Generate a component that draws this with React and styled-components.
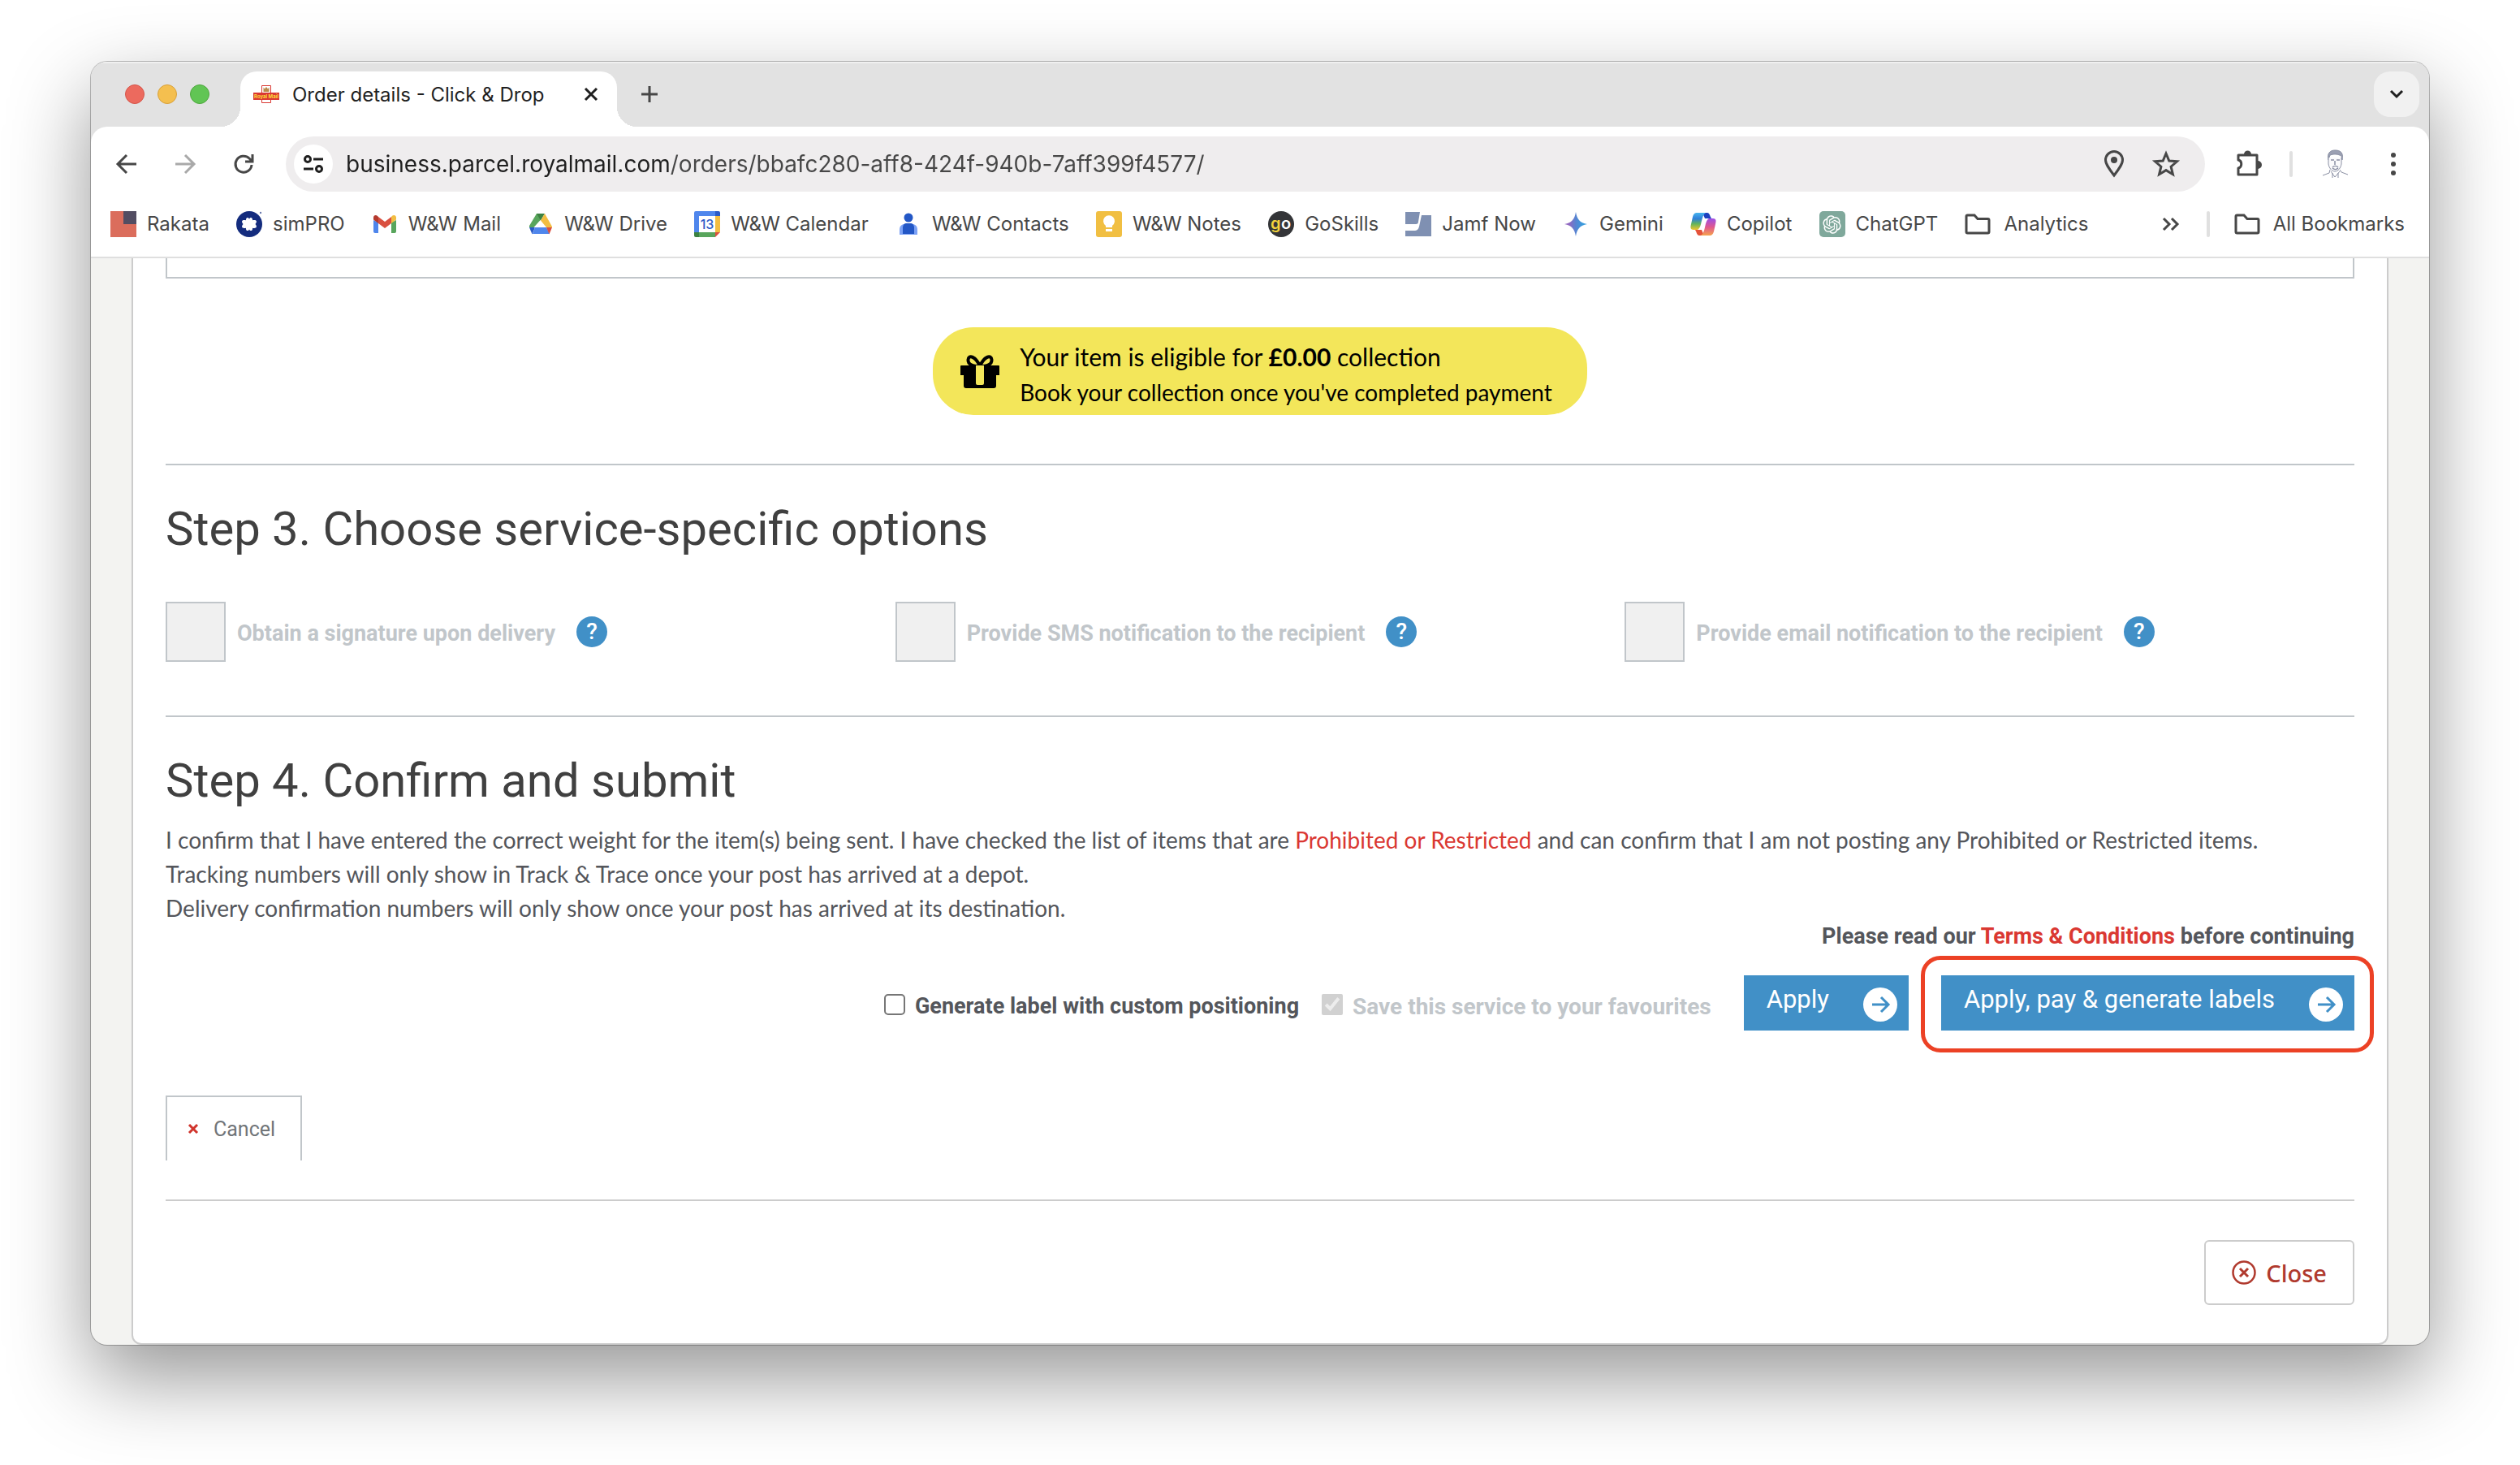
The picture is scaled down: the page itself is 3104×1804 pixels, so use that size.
import React from "react";
import styled, { createGlobalStyle } from "styled-components";
import { RiOpenaiFill } from "react-icons/ri";

const bookmarks = [
  { name: "Rakata", icon: <RakataIcon /> },
  { name: "simPRO", icon: <SimproIcon /> },
  { name: "W&W Mail", icon: <MailIcon /> },
  { name: "W&W Drive", icon: <DriveIcon /> },
  { name: "W&W Calendar", icon: <CalendarIcon /> },
  { name: "W&W Contacts", icon: <ContactsIcon /> },
  { name: "W&W Notes", icon: <NotesIcon /> },
  { name: "GoSkills", icon: <GoIcon /> },
  { name: "Jamf Now", icon: <JamfIcon /> },
  { name: "Gemini", icon: <GeminiIcon /> },
  { name: "Copilot", icon: <CopilotIcon /> },
  { name: "ChatGPT", icon: <ChatIcon /> },
  { name: "Analytics", icon: <FolderIcon />, folder: true },
];

const options = [
  "Obtain a signature upon delivery",
  "Provide SMS notification to the recipient",
  "Provide email notification to the recipient",
];

export default function App() {
  return (
    <Desktop>
      <GlobalStyle />
      <Window>
        <TabStrip>
          <Lights>
            <Light color="#ec6a5e" edge="#d5554a" />
            <Light color="#f4bf4f" edge="#d8a13b" />
            <Light color="#61c554" edge="#4fa73f" />
          </Lights>
          <Tab>
            <RoyalMailIcon />
            <TabTitle>Order details - Click & Drop</TabTitle>
            <PlainButton aria-label="Close tab">
              <svg width="24" height="24" viewBox="0 0 24 24">
                <path d="M5 5l14 14M19 5L5 19" stroke="#1f1f1f" strokeWidth="3" />
              </svg>
            </PlainButton>
          </Tab>
          <NewTab aria-label="New tab">
            <svg width="24" height="24" viewBox="0 0 24 24">
              <path d="M12 2v20M2 12h20" stroke="#474747" strokeWidth="3" />
            </svg>
          </NewTab>
          <TabSearch aria-label="Search tabs">
            <svg width="24" height="24" viewBox="0 0 24 24" fill="none">
              <path d="M5 8l7 7 7-7" stroke="#1f1f1f" strokeWidth="3" />
            </svg>
          </TabSearch>
        </TabStrip>
        <Chrome>
          <Toolbar>
            <Nav>
              <NavButton aria-label="Back">
                <svg width="32" height="32" viewBox="0 0 32 32" fill="none">
                  <path d="M28 16H6M16 5L5 16l11 11" stroke="#474747" strokeWidth="3" />
                </svg>
              </NavButton>
              <NavButton aria-label="Forward" disabled>
                <svg width="32" height="32" viewBox="0 0 32 32" fill="none">
                  <path d="M4 16h22M16 5l11 11-11 11" stroke="#a9a9a9" strokeWidth="3" />
                </svg>
              </NavButton>
              <NavButton aria-label="Reload">
                <svg width="32" height="32" viewBox="0 0 32 32" fill="none">
                  <path d="M26 17a10 10 0 1 1-3-8l3 3M27 4v9h-9" stroke="#474747" strokeWidth="3" />
                </svg>
              </NavButton>
            </Nav>
            <Omnibox>
              <SiteInfo aria-label="View site information">
                <svg width="28" height="28" viewBox="0 0 28 28" fill="none" stroke="#1f1f1f" strokeWidth="3">
                  <circle cx="7" cy="8" r="3.500" />
                  <path d="M14 8h12M2 20h12" />
                  <circle cx="21" cy="20" r="3.500" />
                </svg>
              </SiteInfo>
              <Address
                aria-label="Address"
                type="text"
                defaultValue="business.parcel.royalmail.com/orders/bbafc280-aff8-424f-940b-7aff399f4577/"
              />
              <PlainButton aria-label="Location">
                <svg width="40" height="40" viewBox="0 0 40 40" fill="none">
                  <path
                    d="M20 34C14 26 9.500 20 9.500 15a10.500 10.500 0 0 1 21 0c0 5-4.500 11-10.500 19z"
                    stroke="#474747"
                    strokeWidth="3"
                  />
                  <circle cx="20" cy="15" r="4" fill="#474747" />
                </svg>
              </PlainButton>
              <PlainButton aria-label="Bookmark this tab">
                <svg width="40" height="40" viewBox="0 0 40 40" fill="none">
                  <path
                    d="M20 7l3.800 9 9.700.8-7.400 6.400 2.300 9.500L20 27.600l-8.400 5.100 2.300-9.500-7.400-6.400 9.700-.8z"
                    stroke="#474747"
                    strokeWidth="3"
                  />
                </svg>
              </PlainButton>
            </Omnibox>
            <Tools>
              <NavButton aria-label="Extensions">
                <svg width="36" height="36" viewBox="0 0 36 36" fill="none">
                  <path
                    d="M5 7h23v24H5v-8c5-1 5-9 0-10z"
                    stroke="#474747"
                    strokeWidth="3"
                    strokeLinejoin="round"
                  />
                  <path d="M12 6a4.500 4.500 0 0 1 9 0zM29 14a5 5 0 0 1 0 10z" fill="#474747" />
                </svg>
              </NavButton>
              <ToolDivider />
              <NavButton aria-label="Profile">
                <PortraitIcon />
              </NavButton>
              <NavButton aria-label="Menu">
                <svg width="32" height="32" viewBox="0 0 32 32" fill="#474747">
                  <circle cx="16" cy="5" r="3" />
                  <circle cx="16" cy="16" r="3" />
                  <circle cx="16" cy="27" r="3" />
                </svg>
              </NavButton>
            </Tools>
          </Toolbar>
          <BookmarkBar>
            <BookmarkList>
              {bookmarks.map((item) => (
                <Bookmark href="#" key={item.name} $folder={item.folder}>
                  {item.icon}
                  {item.name}
                </Bookmark>
              ))}
            </BookmarkList>
            <PlainButton aria-label="More bookmarks">
              <svg width="28" height="28" viewBox="0 0 28 28" fill="none">
                <path d="M5 7l7 7-7 7M15 7l7 7-7 7" stroke="#474747" strokeWidth="3" />
              </svg>
            </PlainButton>
            <Divider />
            <Bookmark href="#" $folder>
              <FolderIcon />
              All Bookmarks
            </Bookmark>
          </BookmarkBar>
        </Chrome>

        <Page>
          <Card>
            <BoxEnd />
            <Banner>
              <GiftIcon />
              <BannerText>
                <BannerTitle>
                  Your item is eligible for <b>£0.00</b> collection
                </BannerTitle>
                <div>Book your collection once you've completed payment</div>
              </BannerText>
            </Banner>
            <Rule />
            <Heading>Step 3. Choose service-specific options</Heading>
            <Options>
              {options.map((label, i) => (
                <Option key={label}>
                  <BigCheck type="checkbox" id={"option" + i} disabled />
                  <Label htmlFor={"option" + i} $muted>
                    {label}
                  </Label>
                  <Help aria-label="Help">?</Help>
                </Option>
              ))}
            </Options>
            <Rule />
            <Heading>Step 4. Confirm and submit</Heading>
            <Body>
              I confirm that I have entered the correct weight for the item(s) being sent. I have
              checked the list of items that are <Link href="#">Prohibited or Restricted</Link> and
              can confirm that I am not posting any Prohibited or Restricted items.
              <br />
              Tracking numbers will only show in Track & Trace once your post has arrived at a depot.
              <br />
              Delivery confirmation numbers will only show once your post has arrived at its
              destination.
            </Body>
            <Terms>
              Please read our <Link href="#">Terms & Conditions</Link> before continuing
            </Terms>
            <Actions>
              <CheckRow>
                <SmallCheck type="checkbox" id="custom" />
                <Label htmlFor="custom">Generate label with custom positioning</Label>
              </CheckRow>
              <CheckRow>
                <SmallCheck type="checkbox" id="favourite" defaultChecked disabled />
                <Label htmlFor="favourite" $muted $large>
                  Save this service to your favourites
                </Label>
              </CheckRow>
              <ActionButtons>
                <Submit>
                  <SubmitText>Apply</SubmitText>
                  <ArrowIcon />
                </Submit>
                <Marked>
                  <Submit>
                    <SubmitText>Apply, pay & generate labels</SubmitText>
                    <ArrowIcon />
                  </Submit>
                </Marked>
              </ActionButtons>
            </Actions>
            <Cancel>
              <svg width="14" height="14" viewBox="0 0 14 14">
                <path d="M2 2l10 10M12 2L2 12" stroke="#d0342c" strokeWidth="3" />
              </svg>
              Cancel
            </Cancel>
            <Rule $light />
            <Footer>
              <Close>
                <svg width="30" height="30" viewBox="0 0 30 30" fill="none" stroke="#b03a2e">
                  <circle cx="15" cy="15" r="13.500" strokeWidth="2.500" />
                  <path d="M10 10l10 10M20 10L10 20" strokeWidth="3" />
                </svg>
                Close
              </Close>
            </Footer>
          </Card>
        </Page>
      </Window>
    </Desktop>
  );
}

function RoyalMailIcon() {
  return (
    <svg width="32" height="32" viewBox="0 0 32 32">
      <path d="M10.500 5.500h11v21h-11z" fill="#fff" stroke="#da3832" />
      <path d="M12.500 7.500l1.500 2 2-2.500 2 2.500 1.500-2v5.500h-7z" fill="#b98a4a" />
      <rect y="14" width="32" height="9" fill="#da3832" />
      <text
        x="16"
        y="21"
        textAnchor="middle"
        fontFamily="Inter, sans-serif"
        fontSize="6"
        fontWeight="700"
        fill="#fddc3a"
      >
        Royal Mail
      </text>
    </svg>
  );
}

function RakataIcon() {
  return (
    <svg width="32" height="32" viewBox="0 0 32 32">
      <path d="M0 0h32v32H0z" fill="#db6d5c" />
      <path d="M16 0h16v16H16z" fill="#534d62" />
    </svg>
  );
}

function SimproIcon() {
  return (
    <svg width="32" height="32" viewBox="0 0 32 32">
      <circle cx="16" cy="16" r="16" fill="#142c7e" />
      <path
        d="M16 9.500c1.500-3 4.500-1.500 4 1.800 4.500-1 6.500 1 3.500 4.700 3 3.700 1 5.700-3.500 4.700.5 3.300-2.500 4.800-4 1.800-1.500 3-4.500 1.500-4-1.800-4.500 1-6.500-1-3.500-4.700-3-3.700-1-5.700 3.500-4.700-.5-3.300 2.500-4.800 4-1.800z"
        fill="#fff"
      />
      <circle cx="30" cy="2" r="1.200" fill="#6a79ae" />
    </svg>
  );
}

function MailIcon() {
  return (
    <svg width="32" height="32" viewBox="0 0 32 32">
      <path d="M2 11v14a2 2 0 0 0 2 2h4V14z" fill="#4f86ec" />
      <path d="M30 11v14a2 2 0 0 1-2 2h-4V14z" fill="#58a55c" />
      <path d="M24 7v8l6-4.500V8c0-3-3-4-5-2.200z" fill="#f2bd42" />
      <path d="M8 15V7l8 6 8-6v8l-8 6z" fill="#d95040" />
      <path d="M2 8v2.500L8 15V7l-1-1C5 4.200 2 5 2 8z" fill="#b43a2e" />
    </svg>
  );
}

function DriveIcon() {
  return (
    <svg width="32" height="32" viewBox="0 0 32 32">
      <path d="M11 3h5v7.500L7.500 20H2v-2z" fill="#58a55c" />
      <path d="M11 3h10l-5 8.500z" fill="#3c8141" />
      <path d="M21 3l9 16v1h-7L16 11.500z" fill="#f2bd42" />
      <path d="M2 20h7l-3.500 8.500z" fill="#2b5bc7" />
      <path d="M9 20h14l4 8H6z" fill="#4f86ec" />
      <path d="M23 20h7l-3.500 8.500z" fill="#d95040" />
    </svg>
  );
}

function CalendarIcon() {
  return (
    <svg width="32" height="32" viewBox="0 0 32 32">
      <path d="M2 0h24v6H6v20H0V2a2 2 0 0 1 2-2z" fill="#4f86ec" />
      <path d="M26 0h4a2 2 0 0 1 2 2v4h-6z" fill="#2b5bc7" />
      <path d="M26 6h6v20h-6z" fill="#f2bd42" />
      <path d="M6 26h20v6H6z" fill="#58a55c" />
      <path d="M0 26h6v6H2a2 2 0 0 1-2-2z" fill="#3c8141" />
      <path d="M26 26h6l-6 6z" fill="#d95040" />
      <path d="M6 6h20v20H6z" fill="#fff" />
      <text
        x="16"
        y="22"
        textAnchor="middle"
        fontFamily="Inter, sans-serif"
        fontSize="16"
        fontWeight="500"
        fill="#2b5bc7"
      >
        13
      </text>
    </svg>
  );
}

function ContactsIcon() {
  return (
    <svg width="32" height="32" viewBox="0 0 32 32">
      <circle cx="16" cy="8" r="5.500" fill="#2357c6" />
      <path d="M5 29v-6c0-5 3-7 6-7h10c3 0 6 2 6 7v6z" fill="#7ba1f5" />
      <path d="M9 28v-8c0-3 2-5 4-5h6c2 0 4 2 4 5v8z" fill="#2357c6" />
    </svg>
  );
}

function NotesIcon() {
  return (
    <svg width="32" height="32" viewBox="0 0 32 32">
      <rect width="32" height="32" rx="3" fill="#f1bf42" />
      <path d="M12 20v-2a7 7 0 1 1 8 0v2zM12 22h8v3h-8z" fill="#fff" />
    </svg>
  );
}

function GoIcon() {
  return (
    <svg width="32" height="32" viewBox="0 0 32 32" fontFamily="Inter, sans-serif" fontSize="20">
      <circle cx="16" cy="16" r="16" fill="#343538" />
      <text x="3" y="22" fontWeight="600" fill="#f3d33c">
        g
      </text>
      <text x="16" y="22" fontWeight="600" fill="#fff">
        o
      </text>
    </svg>
  );
}

function JamfIcon() {
  return (
    <svg width="32" height="32" viewBox="0 0 32 32">
      <path d="M0 1h18l-2 12c0 2-1 3-3 3H0z" fill="#7f90b2" />
      <path d="M20 5h12v26H0v-7h11c3 0 5-1 6-5z" fill="#7f90b2" />
    </svg>
  );
}

function GeminiIcon() {
  return (
    <svg width="32" height="32" viewBox="0 0 32 32">
      <defs>
        <linearGradient id="gemini">
          <stop offset="0.200" stopColor="#9168c0" />
          <stop offset="0.500" stopColor="#5684d1" />
          <stop offset="0.800" stopColor="#3a9bdc" />
        </linearGradient>
      </defs>
      <path d="M16 1c1.500 9 5 13.500 14 15-9 1.500-12.500 6-14 15C14.500 22 11 17.500 2 16c9-1.500 12.500-6 14-15z" fill="url(#gemini)" />
    </svg>
  );
}

function CopilotIcon() {
  return (
    <svg width="32" height="32" viewBox="0 0 32 32">
      <defs>
        <linearGradient id="pilotLeft" x1="0" y1="0" x2="0" y2="1">
          <stop offset="0" stopColor="#46b4ee" />
          <stop offset="0.350" stopColor="#2f7fd8" />
          <stop offset="0.650" stopColor="#63b45c" />
          <stop offset="1" stopColor="#f0c52e" />
        </linearGradient>
        <linearGradient id="pilotRight" x1="0" y1="0" x2="0" y2="1">
          <stop offset="0" stopColor="#9a4fe8" />
          <stop offset="0.500" stopColor="#e0588f" />
          <stop offset="1" stopColor="#f5a24c" />
        </linearGradient>
      </defs>
      <path d="M15 2h6c3 0 3 4 5 7h-8z" fill="#1d3fbf" />
      <path d="M17 30h-6c-3 0-3-4-5-7h8z" fill="#e5533a" />
      <path d="M8 2h11c-3 2-4 6-5 10s-2 11-6 11H4c-4 0-4-3-3-7l2-9c1-4 3-5 5-5z" fill="url(#pilotLeft)" />
      <path d="M24 30H13c3-2 4-6 5-10s2-11 6-11h4c4 0 4 3 3 7l-2 9c-1 4-3 5-5 5z" fill="url(#pilotRight)" />
    </svg>
  );
}

function ChatIcon() {
  return (
    <ChatTile>
      <RiOpenaiFill size={27} />
    </ChatTile>
  );
}

function FolderIcon() {
  return (
    <svg width="32" height="32" viewBox="0 0 32 32" fill="none">
      <path
        d="M2 6.500a1.500 1.500 0 0 1 1.500-1.500H12l4 4.500h12.500A1.500 1.500 0 0 1 30 11v14.500a1.500 1.500 0 0 1-1.500 1.500h-25A1.500 1.500 0 0 1 2 25.500z"
        stroke="#474747"
        strokeWidth="3"
      />
    </svg>
  );
}

function PortraitIcon() {
  return (
    <svg width="32" height="36" viewBox="0 0 32 36" fill="none" stroke="#8a8fa3">
      <path d="M8 13c-2-8 2-12 8-12s11 2 9 12l-1-5c-4-2-8-3-14-1z" fill="#9ba0b3" />
      <path d="M8 10v8c1 5 4 9 8 9s7-4 8-9v-8" fill="#fafafc" />
      <path d="M11 13h4M18 13h4M16 14v5M13 22c2-2 5-2 7 0M13 23c2 2 5 2 7 0" strokeWidth="1.500" />
      <path d="M10 25l-1 4-8 3M22 25l2 3 8 3M11 27l5 7 6-7M13 29v6M20 29v6" />
    </svg>
  );
}

function GiftIcon() {
  return (
    <svg width="48" height="44" viewBox="0 0 48 44">
      <path
        d="M24 16C19 4 10 1 9.500 8c-.5 6 6 8 14.500 8 8.500 0 15-2 14.500-8C38 1 29 4 24 16z"
        fill="none"
        stroke="#000"
        strokeWidth="4"
      />
      <path d="M1 15h46a1 1 0 0 1 1 1v11h-4v13a3 3 0 0 1-3 3H7a3 3 0 0 1-3-3V27H0V16a1 1 0 0 1 1-1z" />
      <path d="M19 15h10v22a2 2 0 0 1-2 2h-6a2 2 0 0 1-2-2z" fill="#f3e65a" />
    </svg>
  );
}

function ArrowIcon() {
  return (
    <svg width="42" height="42" viewBox="0 0 42 42" fill="none">
      <circle cx="21" cy="21" r="21" fill="#fff" />
      <path d="M11 21h19M22 12l9 9-9 9" stroke="#4190c7" strokeWidth="3" />
    </svg>
  );
}

const GlobalStyle = createGlobalStyle`
  * {
    box-sizing: border-box;
  }
  body {
    margin: 0;
    background: #fff;
    font-family: Inter, "Liberation Sans", sans-serif;
  }
  button, input {
    font: inherit;
    margin: 0;
  }
  svg {
    display: block;
    flex: none;
  }
`;

const Desktop = styled.div`
  padding: 76px 112px 148px;
  overflow: hidden;
`;

const Window = styled.div`
  border-radius: 20px;
  overflow: hidden;
  background: #f3f3f1;
  box-shadow: 0 0 0 1px rgba(0, 0, 0, 0.25), 0 40px 100px rgba(0, 0, 0, 0.42);
`;

const TabStrip = styled.div`
  display: flex;
  align-items: center;
  height: 80px;
  padding: 0 12px 0 42px;
  background: #e2e2e2;
  box-shadow: inset 0 2px #f0f0f0;
`;

const Lights = styled.div`
  display: flex;
  gap: 16px;
`;

const Light = styled.span`
  width: 24px;
  height: 24px;
  border-radius: 50%;
  background: ${(props) => props.color};
  border: 1px solid ${(props) => props.edge};
`;

const Tab = styled.div`
  position: relative;
  display: flex;
  align-items: center;
  align-self: flex-end;
  gap: 16px;
  width: 464px;
  height: 68px;
  margin-left: 38px;
  padding: 0 20px 12px 16px;
  background: #fff;
  border-radius: 20px 20px 0 0;
  &:before,
  &:after {
    content: "";
    position: absolute;
    bottom: 0;
    width: 24px;
    height: 24px;
  }
  &:before {
    left: -24px;
    background: radial-gradient(circle at 0 0, transparent 24px, #fff 24px);
  }
  &:after {
    right: -24px;
    background: radial-gradient(circle at 100% 0, transparent 24px, #fff 24px);
  }
`;

const TabTitle = styled.span`
  flex: 1;
  font-size: 24px;
  white-space: nowrap;
  color: #1f1f1f;
`;

const PlainButton = styled.button`
  display: flex;
  padding: 0;
  border: 0;
  background: none;
`;

const NewTab = styled(PlainButton)`
  margin-left: 28px;
`;

const TabSearch = styled(PlainButton)`
  align-items: center;
  justify-content: center;
  width: 56px;
  height: 56px;
  margin-left: auto;
  border-radius: 20px;
  background: #f1f1f1;
`;

const Chrome = styled.div`
  background: linear-gradient(#e2e2e2 24px, #fff 24px);
  border-bottom: 2px solid #dfdfdf;
`;

const Toolbar = styled.div`
  display: flex;
  align-items: center;
  padding: 12px 16px;
  background: #fff;
  border-radius: 20px 20px 0 0;
`;

const Nav = styled.div`
  display: flex;
  gap: 16px;
`;

const NavButton = styled(PlainButton)`
  align-items: center;
  justify-content: center;
  width: 56px;
  height: 56px;
`;

const Omnibox = styled.div`
  display: flex;
  align-items: center;
  flex: 1;
  gap: 24px;
  height: 68px;
  margin: 0 26px 0 24px;
  padding: 0 28px 0 10px;
  border-radius: 34px;
  background: #efedee;
`;

const SiteInfo = styled(PlainButton)`
  align-items: center;
  justify-content: center;
  width: 48px;
  height: 48px;
  border-radius: 50%;
  background: #fff;
`;

const Address = styled.input`
  flex: 1;
  min-width: 0;
  margin-left: -8px;
  padding: 0;
  border: 0;
  outline: 0;
  font-size: 28px;
  color: transparent;
  background: linear-gradient(90deg, #1f1f1f 398px, #474747 398px);
  background-clip: text;
`;

const Tools = styled.div`
  display: flex;
  align-items: center;
  gap: 16px;
`;

const Divider = styled.span`
  width: 4px;
  height: 32px;
  border-radius: 2px;
  background: #e0e0e0;
`;

const ToolDivider = styled(Divider)`
  margin: 0 8px 0 6px;
`;

const BookmarkBar = styled.div`
  display: flex;
  align-items: center;
  gap: 30px;
  padding: 8px 30px 20px 24px;
`;

const BookmarkList = styled.div`
  display: flex;
  flex: 1;
  justify-content: space-between;
  margin-right: 57px;
`;

const Bookmark = styled.a`
  display: flex;
  align-items: center;
  gap: ${(props) => (props.$folder ? "16px" : "13px")};
  font-size: 24px;
  line-height: 40px;
  white-space: nowrap;
  color: #474747;
  text-decoration: none;
`;

const ChatTile = styled.span`
  display: flex;
  align-items: center;
  justify-content: center;
  width: 32px;
  height: 32px;
  border-radius: 5px;
  color: #fff;
  background: #7fa89b;
`;

const Page = styled.main`
  padding: 0 50px;
  font-family: Lato, "Open Sans", sans-serif;
`;

const Card = styled.div`
  padding: 0 40px 47px;
  border: 2px solid #ccc;
  border-top: 0;
  border-radius: 0 0 12px 12px;
  background: #fff;
`;

const BoxEnd = styled.div`
  height: 25px;
  border: 2px solid #c1c6ca;
  border-top: 0;
`;

const Banner = styled.div`
  display: flex;
  align-items: center;
  gap: 25px;
  width: fit-content;
  height: 108px;
  margin: 60px auto;
  padding: 0 43px 0 34px;
  border-radius: 50px;
  background: #f3e65a;
  color: #000;
`;

const BannerText = styled.div`
  padding-top: 8px;
  font-size: 28px;
  line-height: 44px;
`;

const BannerTitle = styled.div`
  font-size: 30px;
`;

const Rule = styled.hr`
  height: 2px;
  margin: 0;
  border: 0;
  background: ${(props) => (props.$light ? "#ccc" : "#c1c6ca")};
`;

const Heading = styled.h2`
  margin: 42px 0 0;
  font-family: Roboto, sans-serif;
  font-size: 58px;
  font-weight: 400;
  line-height: 72px;
  color: #404040;
`;

const Options = styled.div`
  display: grid;
  grid-template-columns: repeat(3, 1fr);
  margin: 54px 0 66px;
`;

const Option = styled.div`
  display: flex;
  align-items: center;
`;

const BigCheck = styled.input`
  appearance: none;
  width: 74px;
  height: 74px;
  margin-right: 14px;
  border: 2px solid #c1c6ca;
  background: #f0f0f0;
`;

const Label = styled.label`
  padding-top: 4px;
  font-family: Roboto, sans-serif;
  font-size: ${(props) => (props.$large ? "28px" : "27px")};
  font-weight: 700;
  color: ${(props) => (props.$muted ? "#c1c6ca" : "#54565b")};
`;

const Help = styled.button`
  width: 38px;
  height: 38px;
  margin-left: 26px;
  padding: 0;
  border: 0;
  border-radius: 50%;
  background: #4190c7;
  color: #fff;
  font-family: Roboto, sans-serif;
  font-size: 28px;
  font-weight: 500;
  line-height: 38px;
`;

const Body = styled.p`
  margin: 16px 0 0;
  font-size: 28px;
  line-height: 42px;
  color: #54565b;
`;

const Link = styled.a`
  color: #da3832;
  text-decoration: none;
`;

const Terms = styled.p`
  margin: 0;
  font-family: Roboto, sans-serif;
  font-size: 27px;
  font-weight: 700;
  line-height: 28px;
  text-align: right;
  color: #54565b;
`;

const Actions = styled.div`
  display: flex;
  align-items: center;
  justify-content: flex-end;
  gap: 28px;
  margin-top: 34px;
`;

const CheckRow = styled.div`
  display: flex;
  align-items: center;
  gap: 12px;
  padding-top: 4px;
`;

const SmallCheck = styled.input`
  width: 26px;
  height: 26px;
  &:not(:checked) {
    appearance: none;
    border: 2px solid #767676;
    border-radius: 5px;
    background: #fff;
  }
`;

const ActionButtons = styled.div`
  display: flex;
  gap: 40px;
  margin-left: 12px;
`;

const Submit = styled.button`
  display: flex;
  align-items: center;
  gap: 42px;
  height: 68px;
  padding: 3px 14px 0 28px;
  border: 0;
  background: #4190c7;
  color: #fff;
  font-family: Roboto, sans-serif;
  font-size: 31px;
`;

const SubmitText = styled.span`
  padding-bottom: 12px;
`;

/* frame round the main button */
const Marked = styled.div`
  position: relative;
  &:after {
    content: "";
    position: absolute;
    top: -24px;
    right: -24px;
    bottom: -27px;
    left: -25px;
    border: 5px solid #ec4125;
    border-radius: 24px;
    pointer-events: none;
  }
`;

const Cancel = styled.button`
  display: flex;
  align-items: center;
  gap: 18px;
  height: 80px;
  margin: 80px 0 48px;
  padding: 0 31px 0 25px;
  border: 2px solid #c1c6ca;
  border-bottom: 0;
  background: #fff;
  color: #717579;
  font-family: Roboto, sans-serif;
  font-size: 25px;
`;

const Footer = styled.div`
  display: flex;
  justify-content: flex-end;
  margin-top: 48px;
`;

const Close = styled.button`
  display: flex;
  align-items: center;
  gap: 12px;
  height: 80px;
  padding: 0 32px;
  border: 2px solid #ccc;
  border-radius: 6px;
  background: #fff;
  color: #b03a2e;
  font-family: "Noto Sans", sans-serif;
  font-size: 29px;
  font-weight: 500;
`;
